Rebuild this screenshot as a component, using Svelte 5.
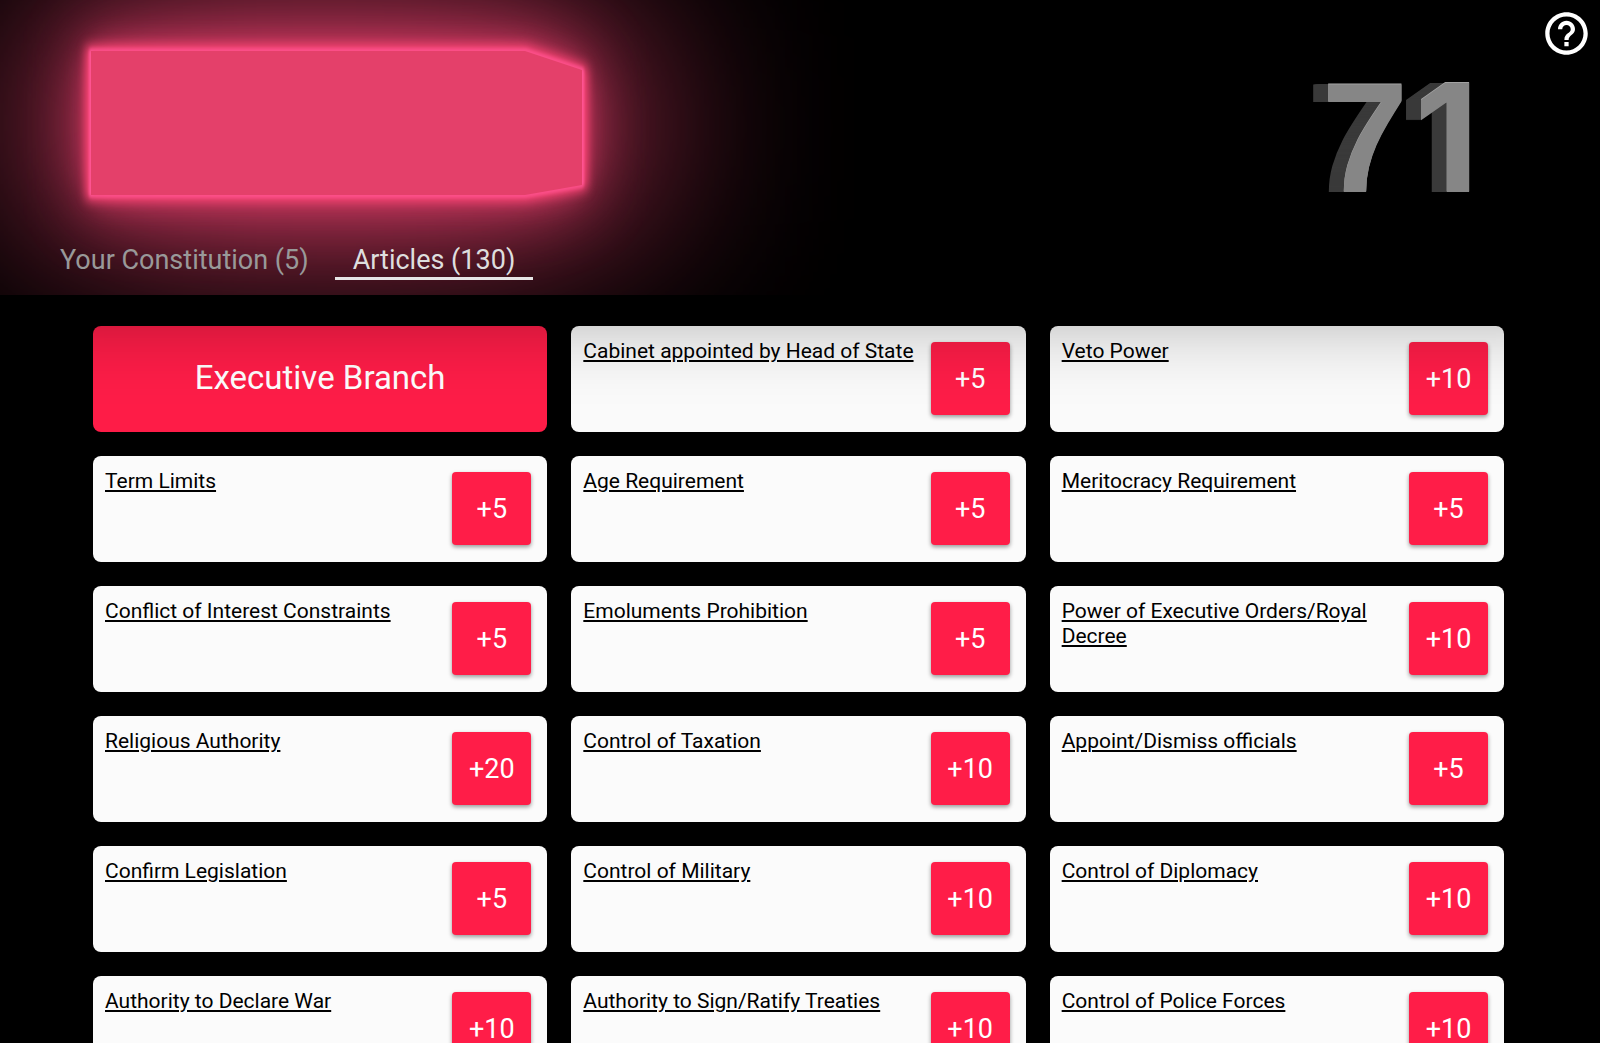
<script>
  const tabs = [
    { id: 'constitution', label: 'Your Constitution (5)' },
    { id: 'articles', label: 'Articles (130)' }
  ];
  let active = $state('articles');

  const section = 'Executive Branch';
  const articles = [
    ['Cabinet appointed by Head of State', 5],
    ['Veto Power', 10],
    ['Term Limits', 5],
    ['Age Requirement', 5],
    ['Meritocracy Requirement', 5],
    ['Conflict of Interest Constraints', 5],
    ['Emoluments Prohibition', 5],
    ['Power of Executive Orders/Royal Decree', 10],
    ['Religious Authority', 20],
    ['Control of Taxation', 10],
    ['Appoint/Dismiss officials', 5],
    ['Confirm Legislation', 5],
    ['Control of Military', 10],
    ['Control of Diplomacy', 10],
    ['Authority to Declare War', 10],
    ['Authority to Sign/Ratify Treaties', 10],
    ['Control of Police Forces', 10]
  ];
  const shape = '0,0 434,0 491,19 491,134 434,144 0,144';
</script>

<header>
  <div class="stage">
    <svg class="banner" viewBox="0 0 492 144" aria-hidden="true">
      <defs>
        <filter id="far" filterUnits="userSpaceOnUse" x="-600" y="-600" width="1700" height="1350" color-interpolation-filters="sRGB">
          <feGaussianBlur stdDeviation="110 96" />
        </filter>
        <filter id="mid" filterUnits="userSpaceOnUse" x="-300" y="-300" width="1100" height="750" color-interpolation-filters="sRGB">
          <feGaussianBlur stdDeviation="30 36" />
        </filter>
        <filter id="near" filterUnits="userSpaceOnUse" x="-100" y="-100" width="700" height="350" color-interpolation-filters="sRGB">
          <feGaussianBlur stdDeviation="12 16" />
        </filter>
        <filter id="edge" filterUnits="userSpaceOnUse" x="-50" y="-50" width="600" height="250" color-interpolation-filters="sRGB">
          <feGaussianBlur stdDeviation="4 6" />
        </filter>
        <filter id="rim" filterUnits="userSpaceOnUse" x="-50" y="-50" width="600" height="250" color-interpolation-filters="sRGB">
          <feGaussianBlur stdDeviation="1 2" />
        </filter>
      </defs>
      <polygon points={shape} fill="#ff4878" stroke="#ff4878" stroke-width="84" opacity="0.8" filter="url(#far)" />
      <polygon points={shape} fill="#f04474" stroke="#f04474" stroke-width="16" opacity="0.65" filter="url(#mid)" />
      <polygon points={shape} fill="#ff4576" opacity="0.8" filter="url(#near)" />
      <polygon points={shape} fill="#ff4576" stroke="#ff4576" stroke-width="10" filter="url(#edge)" />
      <polygon points={shape} fill="none" stroke="#ff5594" stroke-width="4" stroke-linejoin="round" filter="url(#rim)" />
      <polygon points={shape} fill="#e4406a" />
    </svg>
    <div class="score"><span class="seven">7</span><span class="one">1</span></div>
    <button class="help" aria-label="Help">
      <svg viewBox="0 0 24 24" aria-hidden="true">
        <path fill="currentColor" d="M11 18h2v-2h-2v2zm1-16C6.480 2 2 6.480 2 12s4.480 10 10 10 10-4.480 10-10S17.520 2 12 2zm0 18c-4.410 0-8-3.590-8-8s3.590-8 8-8 8 3.590 8 8-3.590 8-8 8zm0-14c-2.210 0-4 1.790-4 4h2c0-1.100.9-2 2-2s2 .9 2 2c0 2-3 1.750-3 5h2c0-2.250 3-2.500 3-5 0-2.210-1.790-4-4-4z" />
      </svg>
    </button>
  </div>
  <nav>
    {#each tabs as tab (tab.id)}
      <button class="tab" class:active={active === tab.id} onclick={() => (active = tab.id)}>{tab.label}</button>
    {/each}
  </nav>
</header>

<main>
  <h2>{section}</h2>
  {#each articles as [name, points] (name)}
    <article>
      <a href="#article">{name}</a>
      <button class="add">+{points}</button>
    </article>
  {/each}
</main>

<style>
  :global(body) {
    background: #000;
    font-family: Roboto, sans-serif;
    overflow-x: hidden;
  }
  :global(html) {
    scrollbar-width: none;
  }
  button {
    border: 0;
    background: none;
    padding: 0;
    font-family: inherit;
    cursor: pointer;
  }
  header {
    position: sticky;
    top: 0;
    z-index: 1;
    overflow: hidden;
    background: #000;
    box-shadow: 0 0 96px rgba(0, 0, 0, 0.54);
    padding-bottom: 15px;
  }
  .stage {
    display: flex;
    align-items: flex-start;
    height: 244px;
    box-sizing: border-box;
    padding: 8px 8px 0 91px;
  }
  .banner {
    width: 492px;
    height: 144px;
    margin-top: 43px;
    overflow: visible;
  }
  .score {
    display: flex;
    gap: 6px;
    margin: 55px 62px 0 auto;
    font-weight: 700;
    line-height: 150px;
    color: #868686;
    text-shadow:
      0 -1px #a2a2a2,
      -1px 0 #3a3a3a, -2px 0 #3a3a3a, -3px 0 #3a3a3a, -4px 0 #3a3a3a,
      -5px 0 #3a3a3a, -6px 0 #3a3a3a, -7px 0 #3a3a3a, -8px 0 #3a3a3a,
      -9px 0 #3a3a3a, -10px 0 #3a3a3a, -11px 0 #3a3a3a, -12px 0 #3a3a3a,
      -13px 0 #3a3a3a, -14px 0 #3a3a3a, -15px 0 #3a3a3a;
  }
  .seven {
    font-family: 'Liberation Sans', sans-serif;
    font-size: 156px;
  }
  .one {
    font-family: Inter, sans-serif;
    font-size: 150px;
  }
  .help {
    color: #fff;
    width: 51px;
    height: 51px;
  }
  .help svg {
    display: block;
    width: 100%;
    height: 100%;
  }
  nav {
    position: relative;
    display: flex;
    gap: 8px;
    padding-left: 42px;
  }
  .tab {
    padding: 0 18px;
    border-bottom: 3px solid transparent;
    font-size: 27px;
    line-height: 33px;
    color: #999;
  }
  .tab.active {
    color: #dedede;
    border-bottom-color: #e6e6e6;
  }
  main {
    display: grid;
    grid-template-columns: repeat(3, 1fr);
    grid-auto-rows: minmax(106px, auto);
    gap: 24px;
    padding: 31px 96px 24px 93px;
  }
  h2,
  article {
    margin: 0;
    border-radius: 8px;
  }
  h2 {
    display: flex;
    align-items: center;
    justify-content: center;
    padding-bottom: 4px;
    background: #ff1d48;
    color: #fff;
    font-size: 33px;
    font-weight: 400;
  }
  article {
    display: flex;
    justify-content: space-between;
    align-items: flex-start;
    gap: 12px;
    padding: 13px 16px 16px 12px;
    background: #fbfbfb;
  }
  a {
    color: #000;
    font-size: 21px;
    line-height: 25px;
    text-decoration-thickness: 2px;
    text-underline-offset: 2px;
  }
  .add {
    flex: none;
    width: 79px;
    height: 73px;
    margin-top: 3px;
    border-radius: 4px;
    background: #ff1d48;
    color: #fff;
    font-size: 27px;
    box-shadow: 0 2px 4px rgba(0, 0, 0, 0.4);
  }
</style>
